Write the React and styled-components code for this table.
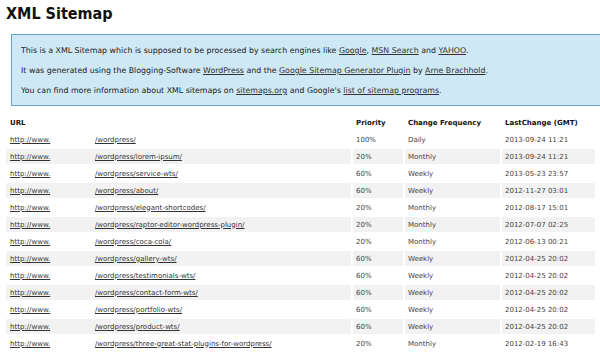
import React from 'react';
import styled, { createGlobalStyle } from 'styled-components';

const GlobalStyle = createGlobalStyle`
  html, body {
    margin: 0;
    padding: 0;
    background: #fff;
  }
  body {
    font-family: "DejaVu Sans", Verdana, sans-serif;
    color: #333;
  }
`;

const Page = styled.div`
  padding: 0 3px 0 4px;
`;

const Title = styled.h1`
  margin: 0;
  padding: 5px 0 0 2px;
  height: 34px;
  box-sizing: border-box;
  font-family: "DejaVu Sans Condensed", "DejaVu Sans", sans-serif;
  font-size: 16px;
  font-weight: bold;
  line-height: 18px;
  color: #111;
`;

const Intro = styled.div`
  margin-left: 7px;
  margin-right: -3px;
  padding: 6px 9px 5px;
  background: #cfe8f5;
  border: 1px solid #66a3d2;
  border-right: none;
  font-size: 7.85px;
  color: #222;
`;

const Line = styled.p`
  margin: 0;
  line-height: 20px;
  height: 20px;
  white-space: nowrap;
  &:last-child {
    height: 19px;
  }
`;

const A = styled.a`
  color: #333;
  text-decoration: underline;
`;

const HostLink = styled(A)`
  display: inline-block;
  width: 85px;
`;

const Table = styled.table`
  margin-top: 7px;
  width: 593px;
  table-layout: fixed;
  border-collapse: separate;
  border-spacing: 2px;
  font-size: 7px;
`;

const Th = styled.th`
  height: 15px;
  padding: 0 3px;
  text-align: left;
  font-weight: bold;
  color: #111;
  white-space: nowrap;
  &:first-child {
    padding-left: 4px;
  }
`;

const Tr = styled.tr`
  background: ${p => (p.$alt ? '#f2f2f2' : 'transparent')};
`;

const Td = styled.td`
  height: 15px;
  padding: 0 3px;
  white-space: nowrap;
  overflow: hidden;
  color: #444;
  &:first-child {
    padding-left: 4px;
  }
`;

const rows = [
  ['/wordpress/', '100%', 'Daily', '2013-09-24 11:21'],
  ['/wordpress/lorem-ipsum/', '20%', 'Monthly', '2013-09-24 11:21'],
  ['/wordpress/service-wts/', '60%', 'Weekly', '2013-05-23 23:57'],
  ['/wordpress/about/', '60%', 'Weekly', '2012-11-27 03:01'],
  ['/wordpress/elegant-shortcodes/', '20%', 'Monthly', '2012-08-17 15:01'],
  ['/wordpress/raptor-editor-wordpress-plugin/', '20%', 'Monthly', '2012-07-07 02:25'],
  ['/wordpress/coca-cola/', '20%', 'Monthly', '2012-06-13 00:21'],
  ['/wordpress/gallery-wts/', '60%', 'Weekly', '2012-04-25 20:02'],
  ['/wordpress/testimonials-wts/', '60%', 'Weekly', '2012-04-25 20:02'],
  ['/wordpress/contact-form-wts/', '60%', 'Weekly', '2012-04-25 20:02'],
  ['/wordpress/portfolio-wts/', '60%', 'Weekly', '2012-04-25 20:02'],
  ['/wordpress/product-wts/', '60%', 'Weekly', '2012-04-25 20:02'],
  ['/wordpress/three-great-stat-plugins-for-wordpress/', '20%', 'Monthly', '2012-02-19 16:43'],
];

export default function App() {
  return (
    <Page>
      <GlobalStyle />
      <Title>XML Sitemap</Title>
      <Intro>
        <Line>
          This is a XML Sitemap which is supposed to be processed by search engines like{' '}
          <A href="#">Google</A>, <A href="#">MSN Search</A> and <A href="#">YAHOO</A>.
        </Line>
        <Line>
          It was generated using the Blogging-Software <A href="#">WordPress</A> and the{' '}
          <A href="#">Google Sitemap Generator Plugin</A> by <A href="#">Arne Brachhold</A>.
        </Line>
        <Line>
          You can find more information about XML sitemaps on <A href="#">sitemaps.org</A> and
          Google's <A href="#">list of sitemap programs</A>.
        </Line>
      </Intro>
      <Table>
        <colgroup>
          <col style={{ width: 345 }} />
          <col style={{ width: 50 }} />
          <col style={{ width: 95 }} />
          <col style={{ width: 93 }} />
        </colgroup>
        <thead>
          <tr>
            <Th>URL</Th>
            <Th>Priority</Th>
            <Th>Change Frequency</Th>
            <Th>LastChange (GMT)</Th>
          </tr>
        </thead>
        <tbody>
          {rows.map((r, i) => (
            <Tr key={i} $alt={i % 2 === 1}>
              <Td>
                <HostLink href="#">http://www.</HostLink>
                <A href="#">{r[0]}</A>
              </Td>
              <Td>{r[1]}</Td>
              <Td>{r[2]}</Td>
              <Td>{r[3]}</Td>
            </Tr>
          ))}
        </tbody>
      </Table>
    </Page>
  );
}
